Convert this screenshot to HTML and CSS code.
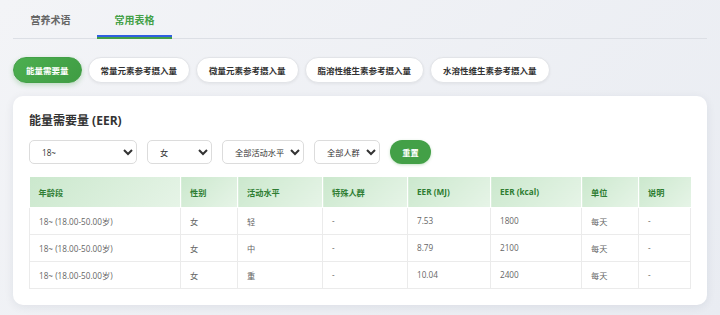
FILE: index.html
```html
<!doctype html>
<html lang="zh-CN">
	<head>
		<meta charset="UTF-8" />
		<meta name="viewport" content="width=device-width, initial-scale=1.0" />
		<title>常用表格</title>
		<link rel="stylesheet" href="styles.css">
	</head>
	<body>
		<nav class="tabs">
			<a href="#" class="tab">营养术语</a>
			<a href="#" class="tab active">常用表格</a>
		</nav>

		<div class="pills">
			<button type="button" class="pill active">能量需要量</button>
			<button type="button" class="pill">常量元素参考摄入量</button>
			<button type="button" class="pill">微量元素参考摄入量</button>
			<button type="button" class="pill">脂溶性维生素参考摄入量</button>
			<button type="button" class="pill">水溶性维生素参考摄入量</button>
		</div>

		<main class="card">
			<h2>能量需要量 (EER)</h2>

			<div class="filters">
				<select class="sel-age">
					<option>18~</option>
				</select>
				<select class="sel-sex">
					<option>女</option>
				</select>
				<select class="sel-level">
					<option>全部活动水平</option>
				</select>
				<select class="sel-group">
					<option>全部人群</option>
				</select>
				<button type="button" class="reset">重置</button>
			</div>

			<table class="data">
				<thead>
					<tr>
						<th class="c-age">年龄段</th>
						<th class="c-sex">性别</th>
						<th class="c-level">活动水平</th>
						<th class="c-group">特殊人群</th>
						<th class="c-mj">EER (MJ)</th>
						<th class="c-kcal">EER (kcal)</th>
						<th class="c-unit">单位</th>
						<th>说明</th>
					</tr>
				</thead>
				<tbody>
					<tr>
						<td>18~ (18.00-50.00岁)</td>
						<td>女</td>
						<td>轻</td>
						<td>-</td>
						<td>7.53</td>
						<td>1800</td>
						<td>每天</td>
						<td>-</td>
					</tr>
					<tr>
						<td>18~ (18.00-50.00岁)</td>
						<td>女</td>
						<td>中</td>
						<td>-</td>
						<td>8.79</td>
						<td>2100</td>
						<td>每天</td>
						<td>-</td>
					</tr>
					<tr>
						<td>18~ (18.00-50.00岁)</td>
						<td>女</td>
						<td>重</td>
						<td>-</td>
						<td>10.04</td>
						<td>2400</td>
						<td>每天</td>
						<td>-</td>
					</tr>
				</tbody>
			</table>
		</main>
	</body>
</html>
```

FILE: styles.css
```css
html,
body,
h2 {
	margin: 0;
	padding: 0;
}

body {
	padding: 13px;
	min-height: 100vh;
	box-sizing: border-box;
	background: linear-gradient(135deg, #f3f4f7, #e9ecf2);
	font-family: "Open Sans", "Noto Sans CJK SC", sans-serif;
	color: #333;
}

/* top tabs */
.tabs {
	display: flex;
	gap: 9px;
	border-bottom: 1px solid #dcdfe5;
}

.tab {
	position: relative;
	width: 75px;
	box-sizing: border-box;
	text-align: center;
	padding: 0 0 12px;
	margin-bottom: -1px;
	line-height: 14px;
	font-size: 10px;
	font-weight: 700;
	color: #666;
	text-decoration: none;
}

/* two-tone underline of the active tab */
.tab.active {
	color: #43a047;
}

.tab.active::after {
	content: "";
	position: absolute;
	left: 0;
	right: 0;
	bottom: 0;
	height: 4px;
	background: linear-gradient(to bottom, #2f5fe0 50%, #43a047 50%);
}

/* table switcher */
.pills {
	display: flex;
	gap: 6px;
	margin: 18px 0 13px;
}

.pill {
	height: 26px;
	padding: 0 12px;
	border: 1px solid #e2e4e8;
	border-radius: 13px;
	background: #fff;
	font-family: inherit;
	font-size: 8.5px;
	font-weight: 700;
	color: #333;
	box-shadow: 0 1px 3px rgba(0, 0, 0, 0.06);
}

.pill.active {
	border-color: #43a047;
	background: linear-gradient(135deg, #4caf50, #3f9c43);
	color: #fff;
	box-shadow: 0 2px 5px rgba(67, 160, 71, 0.3);
}

/* card */
.card {
	background: #fff;
	border-radius: 10px;
	padding: 16px;
	box-shadow: 0 2px 10px rgba(30, 40, 70, 0.08);
}

.card h2 {
	font-size: 12px;
	font-weight: 700;
	line-height: 18px;
	color: #333;
	margin-bottom: 10px;
}

.filters {
	display: flex;
	gap: 10px;
	align-items: center;
	margin-bottom: 13px;
}

.filters select {
	height: 24px;
	padding: 0 3px 0 8px;
	border: 1px solid #dcdcdc;
	border-radius: 5px;
	background: #fff;
	font-family: inherit;
	font-size: 8.2px;
	color: #333;
}

.sel-age {
	width: 108px;
}

.sel-sex {
	width: 65px;
}

.sel-level {
	width: 82px;
}

.sel-group {
	width: 66px;
}

.reset {
	width: 41px;
	height: 24px;
	border: none;
	border-radius: 12px;
	background: #43a047;
	color: #fff;
	font-family: inherit;
	font-size: 8.2px;
	font-weight: 700;
	box-shadow: 0 1px 3px rgba(67, 160, 71, 0.3);
}

/* data table */
.data {
	width: 100%;
	table-layout: fixed;
	border-collapse: collapse;
	font-size: 8.2px;
}

.data th,
.data td {
	box-sizing: border-box;
	text-align: left;
	padding: 0 9px;
	border: 1px solid #ebebeb;
	white-space: nowrap;
}

.data th {
	height: 30px;
	color: #2e7d32;
	font-weight: 700;
	background: linear-gradient(135deg, #cbe8cd, #e6f4e7);
	border-color: #fff;
	border-top: none;
}

.data th:first-child {
	border-left: none;
}

.data th:last-child {
	border-right: none;
}

.data td {
	height: 27px;
	color: #666;
}

.c-age {
	width: 151px;
}

.c-sex {
	width: 57px;
}

.c-level,
.c-group {
	width: 85px;
}

.c-mj {
	width: 83px;
}

.c-kcal {
	width: 91px;
}

.c-unit {
	width: 57px;
}
```
